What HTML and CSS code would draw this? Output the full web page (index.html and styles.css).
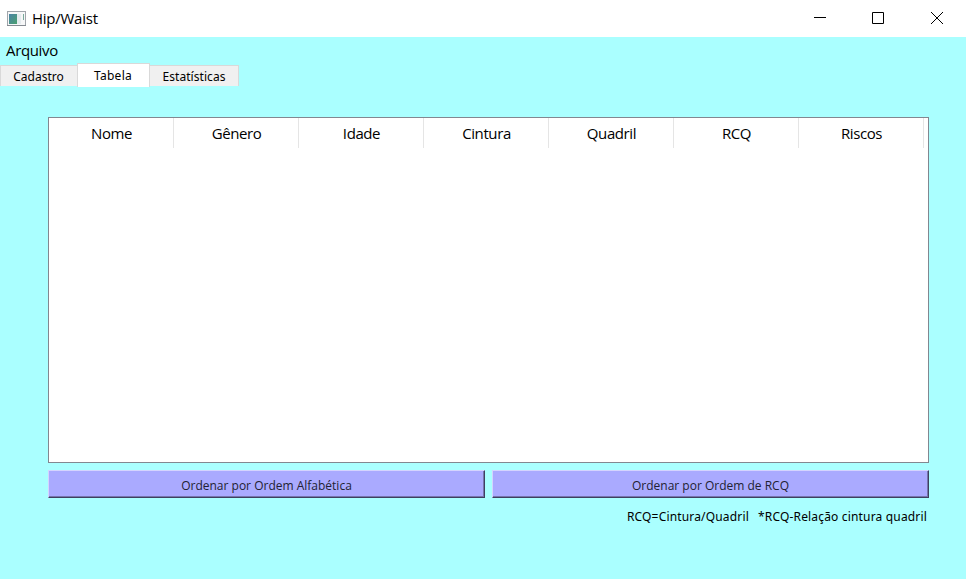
FILE: index.html
```html
<!DOCTYPE html>
<html lang="pt-BR">
<head>
<meta charset="utf-8">
<title>Hip/Waist</title>
<link rel="stylesheet" href="styles.css">
</head>
<body>
<header class="titlebar">
  <svg class="app-icon" width="19" height="16" viewBox="0 0 19 16">
    <defs><linearGradient id="screen" x1="0" y1="0" x2="1" y2="1"><stop offset="0" stop-color="#4b83a6"/><stop offset="1" stop-color="#4aa070"/></linearGradient></defs>
    <rect x=".5" y=".5" width="18" height="14" fill="#f6f7f8" stroke="#a0a5ab"/>
    <path d="M0 14.500h19" stroke="#858b92"/>
    <rect x="2" y="3" width="8" height="10" fill="url(#screen)"/>
    <rect x="10" y="3" width="4" height="10" fill="#e4ebee"/>
    <rect x="16" y="3" width="1" height="6" fill="#79a99a"/>
  </svg>
  <span class="title">Hip/Waist</span>
  <div class="controls">
    <svg width="58" height="37" viewBox="0 0 58 37"><path d="M23 17.500h12"/></svg>
    <svg width="58" height="37" viewBox="0 0 58 37"><path d="M23.500 12.500h11v11h-11z"/></svg>
    <svg width="59" height="37" viewBox="0 0 59 37"><path d="M24 12l12 12M36 12l-12 12"/></svg>
  </div>
</header>
<nav class="menu"><span>Arquivo</span></nav>
<div class="tabs">
  <div class="tab cadastro"><span>Cadastro</span></div>
  <div class="tab active"><span>Tabela</span></div>
  <div class="tab stats"><span>Estatísticas</span></div>
</div>
<main class="content">
  <div class="table">
    <div class="head">
      <div><span>Nome</span></div><div><span>Gênero</span></div><div><span>Idade</span></div><div><span>Cintura</span></div><div><span>Quadril</span></div><div><span>RCQ</span></div><div><span>Riscos</span></div>
    </div>
  </div>
  <div class="buttons">
    <button><span>Ordenar por Ordem Alfabética</span></button>
    <button><span>Ordenar por Ordem de RCQ</span></button>
  </div>
  <div class="notes"><span>RCQ=Cintura/Quadril</span><span>*RCQ-Relação cintura quadril</span></div>
</main>
</body>
</html>
```
FILE: styles.css
```css
* { box-sizing: border-box; }
body { margin: 0; height: 579px; overflow: hidden; background: #aaffff; color: #000; font-family: "Open Sans", "Noto Sans", sans-serif; }
.titlebar { height: 37px; background: #fff; display: flex; align-items: center; padding-left: 7px; }
.title { margin-left: 6px; padding-bottom: 2px; font-size: 15px; letter-spacing: -.25px; }
.controls { margin-left: auto; display: flex; }
.controls path { fill: none; stroke: #000; }
.menu { height: 26px; padding: 3px 6px 0; font-size: 15px; letter-spacing: -.35px; line-height: 20px; }
.tabs { display: flex; align-items: flex-start; height: 24px; font-family: "Noto Sans", sans-serif; font-size: 12px; }
.tab { height: 21px; margin-top: 2px; background: #f0f0f0; border: 1px solid #d9d9d9; border-bottom: 0; display: flex; align-items: center; justify-content: center; }
.cadastro { width: 77px; border-right: 0; padding-right: 1px; }
.active { width: 73px; height: 24px; margin-top: 0; padding-right: 1px; background: #fff; letter-spacing: .3px; }
.stats { width: 89px; border-left: 0; letter-spacing: .05px; }
.content { padding: 30px 37px 0 48px; }
.table { height: 346px; background: #fff; border: 1px solid #828790; }
.head { display: flex; height: 30px; }
.head div { width: 125px; padding-left: 1px; border-right: 1px solid #e5e5e5; font-size: 15px; letter-spacing: -.4px; display: flex; align-items: center; justify-content: center; }
.buttons { display: grid; grid-template-columns: 1fr 1fr; gap: 7px; margin-top: 7px; }
.buttons button { height: 28px; background: #aaaaff; border: 1px solid; border-color: #d4d4ff #3f3f60 #3f3f60 #d4d4ff; box-shadow: inset -1px -1px #7575ad; color: #222233; font: 12px "Open Sans", sans-serif; padding: 2px 0 0; }
.notes { display: flex; justify-content: flex-end; gap: 9px; margin-top: 10px; padding-right: 2px; font-family: "Noto Sans", sans-serif; font-size: 12px; letter-spacing: .17px; line-height: 18px; }
```
